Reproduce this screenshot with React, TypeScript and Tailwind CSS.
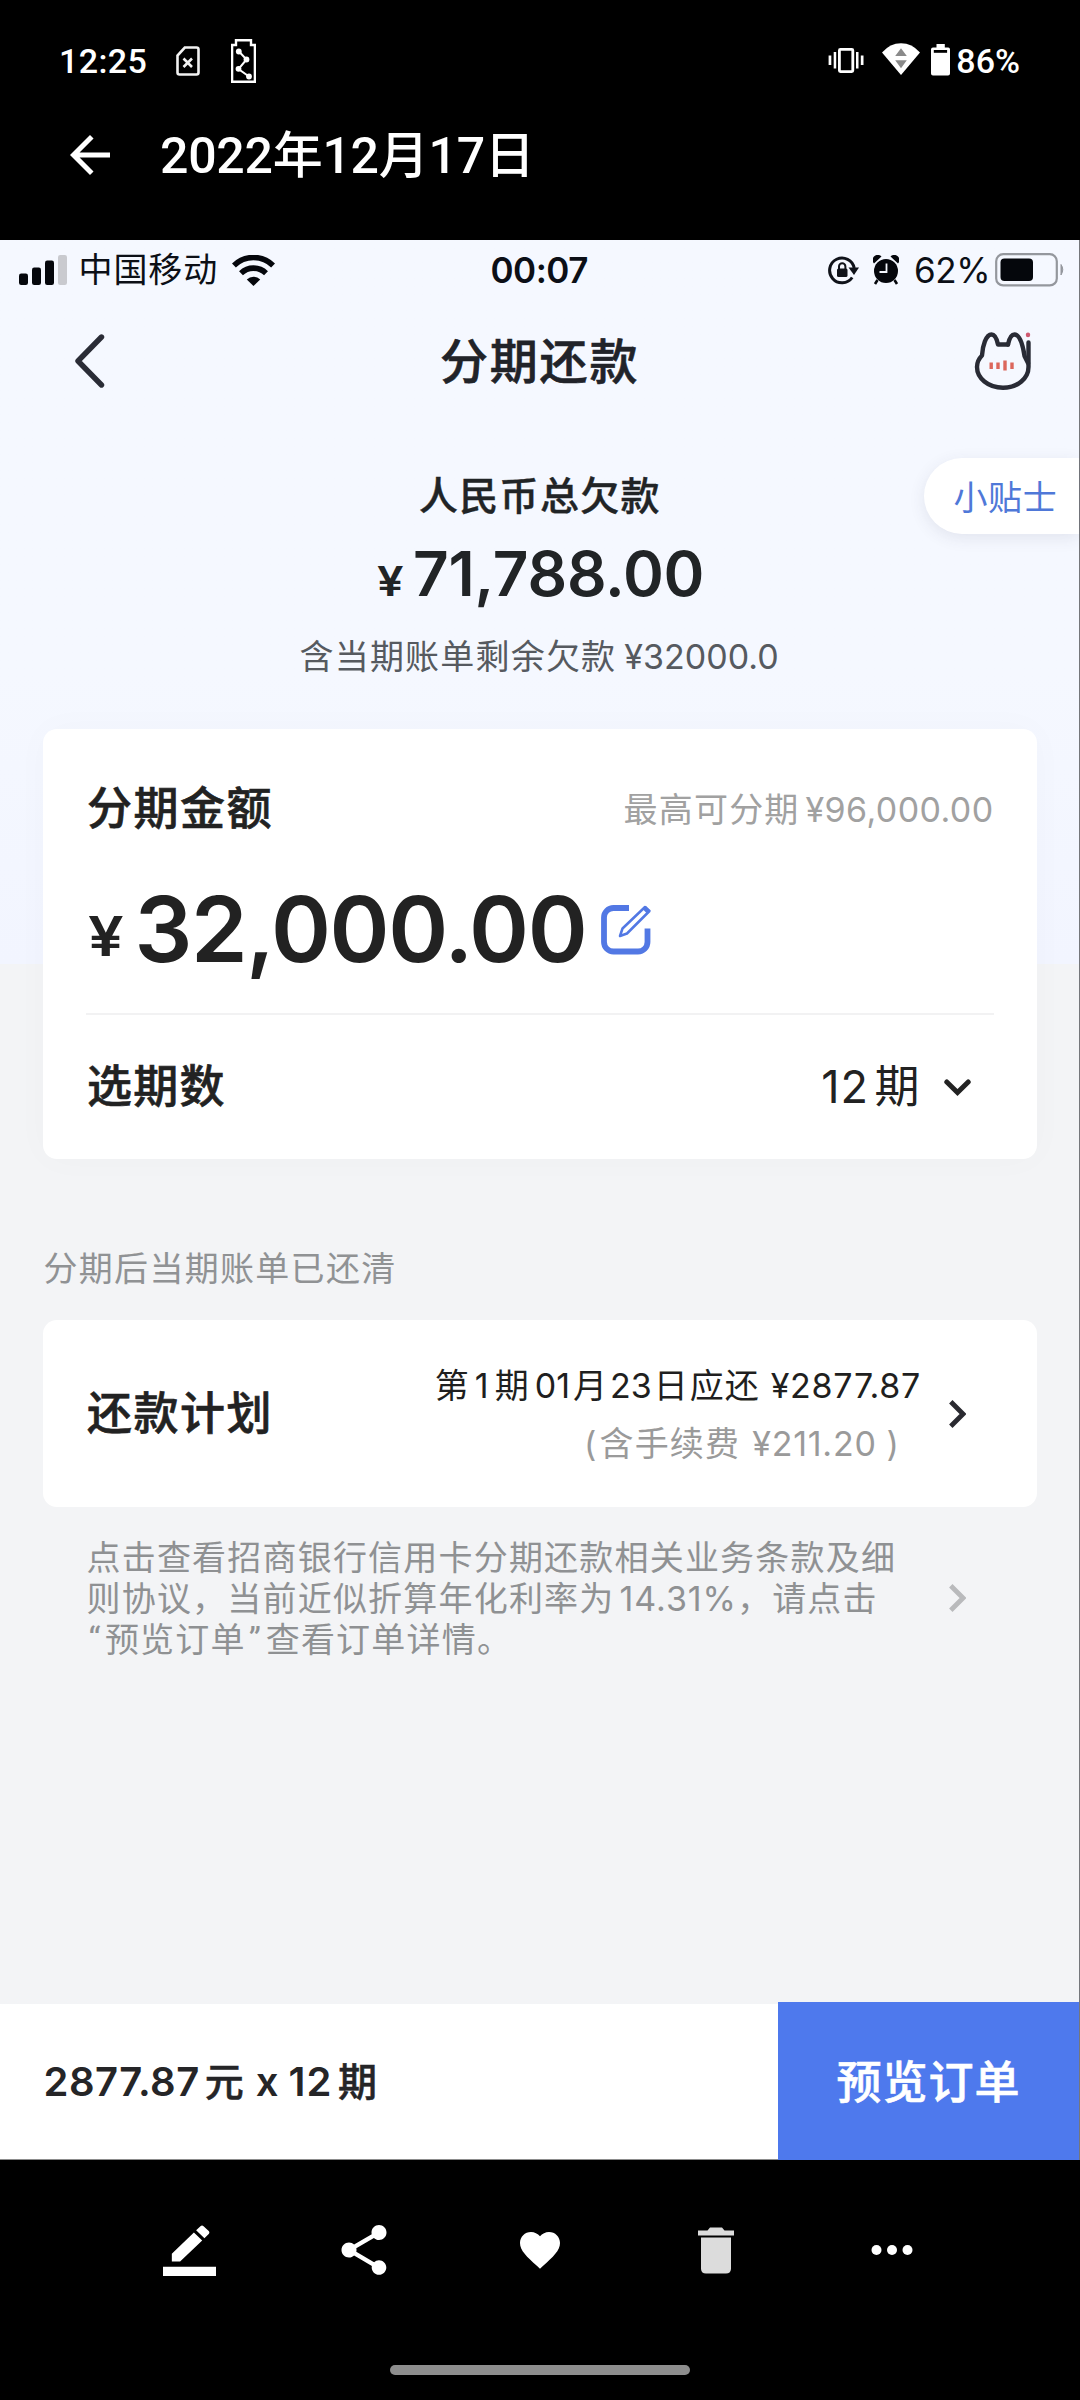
import React from 'react';

function AndroidStatus() {
  return (
    <div className="flex h-[120px] items-center pl-[59px] pr-[60px] pt-[1px] font-[Roboto,sans-serif] text-[34px] font-medium leading-none text-white">
      <span className="tracking-[0.400px]">12:25</span>
      <svg className="ml-[29px]" width="24" height="30" viewBox="0 0 24 30" fill="none" stroke="#f2f2f2" strokeWidth="2.6">
        <path d="M8.8 1.5H20.5a2 2 0 0 1 2 2V26.500a2 2 0 0 1-2 2H3.500a2 2 0 0 1-2-2V9.500Z" />
        <path d="M7.500 12.500l8.500 8.500M16 12.500l-8.500 8.500" />
      </svg>
      <svg className="ml-[31px]" width="25" height="44" viewBox="0 0 25 44" fill="none" stroke="#fff" strokeWidth="2.400">
        <path d="M5 1.200H20V6H23.900V42.800H1.100V6H5Z" />
        <path d="M8 12.500L15.500 20.500L7.500 30L18 37.500" strokeWidth="2" />
        <g fill="#fff" stroke="none">
          <circle cx="7.800" cy="12.500" r="2.900" />
          <circle cx="15.500" cy="20.500" r="2.900" />
          <circle cx="7.500" cy="29.800" r="2.900" />
          <circle cx="18" cy="37.500" r="2.900" />
        </g>
      </svg>
      <div className="ml-auto flex items-center">
        <svg width="36" height="25" viewBox="0 0 36 25" fill="#fff">
          <rect x="11.400" y="1.400" width="13.400" height="22.200" rx="1" fill="none" stroke="#fff" strokeWidth="2.800" />
          <rect x="0.600" y="7.500" width="2.700" height="9.500" />
          <rect x="5.700" y="4" width="2.500" height="16.500" />
          <rect x="28" y="4" width="2.500" height="16.500" />
          <rect x="32.800" y="7.500" width="2.700" height="9.500" />
        </svg>
        <svg className="ml-[18px] -mt-[3px]" width="38" height="32" viewBox="0 0 38 32">
          <path d="M0 9.500Q8 0.200 19 0.200T38 9.500L19 32Z" fill="#fff" />
          <path d="M13.200 13L19 5.200L24.800 13ZM13.200 17.200H24.800L19 25.300Z" fill="#8a8a8a" />
        </svg>
        <svg className="ml-[11px] -mt-[2px]" width="19" height="32" viewBox="0 0 19 32">
          <path d="M5.500 0H13.800V3.500H17.200A2 2 0 0 1 19 5.500V29.500A2 2 0 0 1 17 31.500H2A2 2 0 0 1 0 29.500V5.500A2 2 0 0 1 2 3.500H5.500Z" fill="#fff" />
          <rect x="2.800" y="6" width="13.300" height="2.800" fill="#000" />
        </svg>
        <span className="ml-[6px]">86%</span>
      </div>
    </div>
  );
}

function GalleryHeader() {
  return (
    <div className="flex h-[120px] items-start pl-[60px] text-white">
      <svg className="mt-[5px]" width="60" height="60" viewBox="0 0 24 24" fill="#fff">
        <path d="M20 11H7.830l5.590-5.590L12 4l-8 8 8 8 1.410-1.410L7.830 13H20v-2z" />
      </svg>
      <h1 className='ml-[40px] font-[Roboto,"Noto_Sans_CJK_SC",sans-serif] text-[50px] font-medium leading-[72px] tracking-[-0.250px]'>2022年12月17日</h1>
    </div>
  );
}

function PhoneStatus() {
  return (
    <div className="flex h-[60px] items-center pl-[18.500px] pr-[14px] leading-none text-[#0c0f16]">
      <div className="flex w-[472px] items-center">
        <svg width="48" height="30" viewBox="0 0 48 30">
          <rect x="0" y="18.500" width="9" height="11.500" rx="2.200" fill="#05070c" />
          <rect x="13" y="12.500" width="9" height="17.500" rx="2.200" fill="#05070c" />
          <rect x="26" y="5.500" width="9" height="24.500" rx="2.200" fill="#05070c" />
          <rect x="39" y="0" width="9" height="30" rx="2.200" fill="#c9cacf" />
        </svg>
        <span className="ml-[12px] text-[34px] tracking-[0.900px] leading-[40px]">中国移动</span>
        <svg className="ml-[13.500px]" width="43" height="31" viewBox="0 0 43 31" fill="none" stroke="#05070c" strokeWidth="5.600">
          <path d="M1.900 10.500A28 28 0 0 1 41.100 10.500" />
          <path d="M9 18.200A18 18 0 0 1 34 18.200" />
          <path d="M14.800 24.400A10 10 0 0 1 28.200 24.400L21.500 31Z" fill="#05070c" stroke="none" />
        </svg>
      </div>
      <span className="text-[35px] font-semibold tracking-[-0.500px]">00:07</span>
      <div className="ml-auto flex items-center">
        <svg width="31" height="30" viewBox="0 0 31 30">
          <path d="M24.200 22.500A12.400 12.400 0 1 1 26.200 13" fill="none" stroke="#10131a" strokeWidth="3" />
          <path d="M20.500 12.500H31L26 20Z" fill="#10131a" />
          <rect x="9" y="13.500" width="10.500" height="8.500" rx="1.500" fill="#10131a" />
          <path d="M11 14.500V11.500a3.200 3.200 0 0 1 6.400 0V14.500" fill="none" stroke="#10131a" strokeWidth="2" />
        </svg>
        <svg className="ml-[14px]" width="26" height="30" viewBox="0 0 26 30">
          <circle cx="13" cy="16" r="12" fill="#05070c" />
          <path d="M1 8.500A5 5 0 0 1 8.500 1.500M17.500 1.500A5 5 0 0 1 25 8.500" fill="#05070c" />
          <path d="M4.500 25L2 29M21.500 25L24 29" stroke="#05070c" strokeWidth="2.600" />
          <path d="M13.500 8.500V17H6.500" fill="none" stroke="#f4f7fe" strokeWidth="1.800" />
        </svg>
        <span className="ml-[15px] text-[35px] tracking-[-0.500px]">62%</span>
        <svg className="ml-[5px]" width="70" height="34" viewBox="0 0 70 34">
          <rect x="1.200" y="1.200" width="60.600" height="31.200" rx="7" fill="none" stroke="#94979d" strokeWidth="2.200" />
          <rect x="5.500" y="5.500" width="32.500" height="22.500" rx="4" fill="#05070c" />
          <path d="M66 11.500q3.500 5 0 10.500Z" fill="#94979d" stroke="#94979d" />
        </svg>
      </div>
    </div>
  );
}

function CatIcon() {
  return (
    <svg className="ml-auto" width="58" height="60" viewBox="974 332 58 60" fill="none" stroke="#292b35" strokeWidth="4.400" strokeLinecap="round" strokeLinejoin="round">
      <path d="M1008 345.500H998C996.500 338.500 994 335.500 991.500 335.500C986 335.500 982.500 347 982 356.500C978.500 360 977 364 977 368C977 379 988 388.700 1003 388.700C1018 388.700 1028.500 379 1028.500 368V343.500" />
      <path d="M1008 345.500C1009.500 338.500 1011.500 335.500 1014.500 335.500C1020 335.500 1023 347 1024.500 357L1028 364" />
      <path d="M1028 335.700V336" stroke="#cf5a70" strokeWidth="4.400" />
      <path d="M991.200 363.500V370M998 363.500V370M1005 361.500V371.500M1012 363.500V370" stroke="#dc675c" strokeWidth="3.400" strokeLinecap="butt" />
    </svg>
  );
}

function NavBar() {
  return (
    <div className="flex h-[122px] items-center pl-[75px] pr-[47px]">
      <svg width="58" height="54" viewBox="0 0 58 54" fill="none" stroke="#2a2c36" strokeWidth="5.400" strokeLinecap="round" strokeLinejoin="round">
        <path d="M26.500 3L3 27L26.500 51" />
      </svg>
      <h2 className="ml-[307px] pt-[1px] text-[48px] font-medium leading-[60px] tracking-[1.800px] text-[#212329] [-webkit-text-stroke:0.600px]">分期还款</h2>
      <CatIcon />
    </div>
  );
}

function DebtSummary() {
  return (
    <section className="relative h-[307px] pt-[44px] text-[#212426]">
      <div className="pl-[419px] text-[39px] font-medium leading-[60px] tracking-[1.300px] [-webkit-text-stroke:0.400px]">人民币总欠款</div>
      <div className="flex h-[94px] items-baseline pl-[377px] font-semibold leading-[96px]">
        <span className="w-[23.500px] origin-left scale-x-115 text-[41px]">¥</span>
        <span className="ml-[12.500px] text-[62px] tracking-[-0.200px]">71,788.00</span>
      </div>
      <div className="flex pl-[299.500px] text-[34px] leading-[74px] text-[#565a60]">
        <span className="tracking-[1.200px]">含当期账单剩余欠款</span>
        <span className="ml-[8px]">¥32000.0</span>
      </div>
      <button className="absolute right-0 top-[36px] flex h-[76px] w-[155px] items-center rounded-l-full bg-white pl-[29.500px] pt-[2px] text-[34px] tracking-[0.600px] text-[#4f78d8] shadow-[0_4px_16px_rgba(60,60,90,0.10)]">
        小贴士
      </button>
    </section>
  );
}

function EditIcon() {
  return (
    <svg className="ml-[15px] mt-[1px] text-[#5278e4]" width="51" height="50" viewBox="0 0 51 50" fill="none" stroke="currentColor">
      <path d="M28 3H12.500A9.500 9.500 0 0 0 3 12.500V37A9.500 9.500 0 0 0 12.500 46.500H37A9.500 9.500 0 0 0 46.500 37V23.500" strokeWidth="5.800" />
      <path d="M19 31L21.500 23.500L44 2L48.500 6L26 28.500Z" strokeWidth="2.500" strokeLinejoin="round" />
      <path d="M42 4.500L46 8.500L49 5.500L45 1Z" fill="currentColor" stroke="none" />
    </svg>
  );
}

function AmountCard() {
  return (
    <section className="ml-[43px] mr-[42px] flex h-[430px] flex-col rounded-[14px] bg-white pt-[50px] text-[#222] shadow-[0_0_36px_rgba(50,40,60,0.025)]">
      <div className="flex h-[60px] items-center justify-between pl-[44px] pr-[43.500px]">
        <span className="text-[45px] font-medium tracking-[1.500px] [-webkit-text-stroke:0.600px]">分期金额</span>
        <div className="flex text-[34px] text-[#a1a1a1]">
          <span className="tracking-[1.200px]">最高可分期</span>
          <span className="ml-[6px] tracking-[0.400px]">¥96,000.00</span>
        </div>
      </div>
      <div className="flex h-[174px] items-center pl-[45px] pt-[7px] leading-none">
        <span className="w-[32px] origin-left scale-x-115 pt-[14px] text-[55px] font-semibold leading-none">¥</span>
        <span className="ml-[14.500px] text-[91px] font-semibold tracking-[-1.500px]">32,000.00</span>
        <EditIcon />
      </div>
      <div className="mx-[43px] h-[2px] bg-[#f2f2f3]" />
      <div className="flex flex-1 items-center justify-between pl-[44px] pr-[66.500px]">
        <span className="text-[45px] font-medium tracking-[1.300px] [-webkit-text-stroke:0.600px]">选期数</span>
        <div className="flex items-center text-[45px]">
          <span className="tracking-[1px]">12</span>
          <span className="ml-[5.500px]">期</span>
          <svg className="ml-[24px]" width="27" height="17" viewBox="0 0 27 17" fill="none" stroke="#232323" strokeWidth="5" strokeLinecap="round">
            <path d="M2.800 3L13.500 13.500L24.200 3" />
          </svg>
        </div>
      </div>
    </section>
  );
}

function ChevronRight({ className }: { className: string }) {
  return (
    <svg className={className} width="17" height="28" viewBox="0 0 17 28" fill="none" stroke="currentColor" strokeWidth="4.800">
      <path d="M1.800 1.800L14 14L1.800 26.200" />
    </svg>
  );
}

function PlanCard() {
  return (
    <section className="ml-[43px] mr-[42px] flex h-[187px] items-center rounded-[14px] bg-white pl-[44px] pr-[71px]">
      <span className="text-[45px] font-medium tracking-[1.500px] text-[#222] [-webkit-text-stroke:0.600px]">还款计划</span>
      <div className="ml-auto flex flex-col items-end pt-[2px] text-[34px] leading-[58px]">
        <div className="flex text-[#1f1f20]">
          <span>第</span>
          <span className="ml-[6px]">1</span>
          <span className="ml-[6px]">期</span>
          <span className="ml-[6px]">01</span>
          <span className="ml-[3px]">月</span>
          <span className="ml-[3px]">23</span>
          <span className="ml-[2px]">日</span>
          <span className="ml-[2px] tracking-[1px]">应还</span>
          <span className="ml-[11px] tracking-[0.700px]">¥2877.87</span>
        </div>
        <div className="mr-[22px] flex text-[#9a9a9a]">
          <span>(</span>
          <span className="ml-[3px] tracking-[1.200px]">含手续费</span>
          <span className="ml-[12px] tracking-[0.750px]">¥211.20</span>
          <span className="ml-[10px]">)</span>
        </div>
      </div>
      <ChevronRight className="ml-[28px] text-[#2a2a30]" />
    </section>
  );
}

function Terms() {
  return (
    <section className="flex items-center pl-[86.500px] pr-[113px] pt-[29.500px]">
      <div className="text-[34px] leading-[41.300px] tracking-[1.200px] text-[#8f9193]">
        <div>点击查看招商银行信用卡分期还款相关业务条款及细</div>
        <div className="flex">
          <span>则协议，当前近似折算年化利率为</span>
          <span className="ml-[5px] tracking-[0.950px]">14.31%</span>
          <span>，请点击</span>
        </div>
        <div className="flex">
          <span className="w-[18.400px] pl-[2px] font-[Roboto,sans-serif]">“</span>
          <span>预览订单</span>
          <span className="w-[20px] pl-[3px] font-[Roboto,sans-serif]">”</span>
          <span>查看订单详情。</span>
        </div>
      </div>
      <ChevronRight className="ml-auto text-[#b9babc]" />
    </section>
  );
}

function OrderBar() {
  return (
    <div className="mt-auto flex h-[158px] items-end">
      <div className="flex h-[156px] w-[778px] items-center border-b border-[#8c8c8c] bg-white pl-[43.500px] pt-[1px] text-[40px] font-semibold text-[#252527]">
        <span className="tracking-[0.500px]">2877.87</span>
        <span className="ml-[5px] text-[39px] font-medium [-webkit-text-stroke:0.500px]">元</span>
        <span className="ml-[12px]">x</span>
        <span className="ml-[10px] tracking-[1px]">12</span>
        <span className="ml-[5.500px] text-[39px] font-medium [-webkit-text-stroke:0.500px]">期</span>
      </div>
      <button className="flex h-[158px] flex-1 items-center justify-center bg-[#4e79ed] pt-[3px] text-[45px] font-medium tracking-[1px] text-white [-webkit-text-stroke:0.600px]">
        预览订单
      </button>
    </div>
  );
}

function GalleryActions() {
  return (
    <nav className="mx-auto grid h-[180px] w-[880px] grid-cols-5 place-items-center">
      <svg width="53" height="53" viewBox="0 0 24 24" fill="#fff" className="translate-x-[1px]">
        <g transform="translate(0 0.700) scale(1 0.960)">
          <path d="M17.750 7L14 3.250l-10 10V17h3.750l10-10zm2.960-2.960c.39-.39.39-1.020 0-1.410L18.370.29c-.39-.39-1.020-.39-1.410 0L15 2.250 18.750 6l1.960-1.960z" />
        </g>
        <path d="M0 19.400h24v4.100H0z" />
      </svg>
      <svg width="60" height="60" viewBox="0 0 24 24" fill="#fff">
        <path d="M18 16.080c-.76 0-1.440.3-1.960.77L8.910 12.700c.05-.23.09-.46.09-.7s-.04-.47-.09-.7l7.050-4.110c.54.5 1.250.81 2.040.81 1.660 0 3-1.340 3-3s-1.340-3-3-3-3 1.340-3 3c0 .24.04.47.09.7L8.040 9.810C7.500 9.310 6.790 9 6 9c-1.660 0-3 1.340-3 3s1.340 3 3 3c.79 0 1.500-.31 2.040-.81l7.120 4.160c-.05.21-.08.43-.08.65 0 1.610 1.310 2.920 2.920 2.920s2.920-1.310 2.920-2.920-1.310-2.920-2.920-2.920z" />
      </svg>
      <svg width="48" height="48" viewBox="0 0 24 24" fill="#fff">
        <path d="M12 21.350l-1.450-1.320C5.400 15.360 2 12.280 2 8.500 2 5.420 4.420 3 7.500 3c1.740 0 3.410.81 4.500 2.090C13.090 3.810 14.760 3 16.500 3 19.580 3 22 5.420 22 8.500c0 3.780-3.400 6.860-8.550 11.540L12 21.350z" />
      </svg>
      <svg width="36" height="47" viewBox="0 0 36 47" fill="#dcdcdc">
        <path d="M0 3.500H9.500L12 0.500H24L26.500 3.500H36V8.500H0Z" />
        <path d="M3 10.500H33V42A5 5 0 0 1 28 46.500H8A5 5 0 0 1 3 42Z" />
      </svg>
      <svg width="42" height="10" viewBox="0 0 42 10" fill="#fff">
        <circle cx="5.500" cy="5" r="5" />
        <circle cx="21" cy="5" r="5" />
        <circle cx="36.500" cy="5" r="5" />
      </svg>
    </nav>
  );
}

export default function App() {
  return (
    <div className="flex h-[2400px] w-[1080px] flex-col overflow-hidden bg-black">
      <AndroidStatus />
      <GalleryHeader />
      <main className='flex h-[1920px] flex-col border-r border-[#75777b] bg-[#f3f4f6] font-[Inter,"Noto_Sans_CJK_SC",sans-serif]'>
        <div className="h-[724px] bg-linear-to-b from-[#f5f8ff] from-60% to-[#f2f5ff]">
          <PhoneStatus />
          <NavBar />
          <DebtSummary />
          <AmountCard />
        </div>
        <p className="mt-[195px] h-[161px] pl-[43.500px] pt-[80px] text-[34px] leading-[60px] tracking-[1.300px] text-[#909294]">分期后当期账单已还清</p>
        <PlanCard />
        <Terms />
        <OrderBar />
      </main>
      <GalleryActions />
      <div className="mx-auto mt-[25px] h-[10px] w-[300px] rounded-full bg-[#8e8e8e]" />
    </div>
  );
}
